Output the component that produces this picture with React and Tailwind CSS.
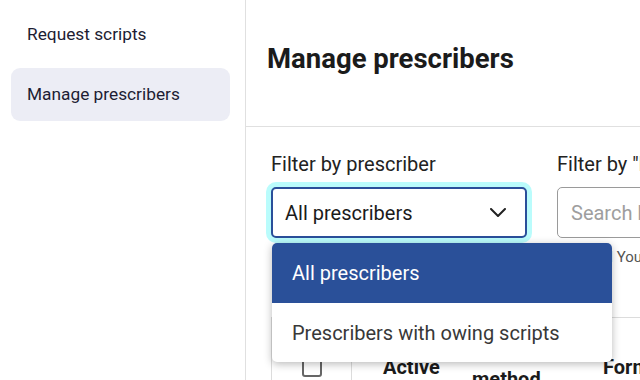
import React from 'react';

const navItems = [
  { label: 'Request scripts', active: false },
  { label: 'Manage prescribers', active: true },
];

const Chevron = () => (
  <svg width="16" height="9" viewBox="0 0 16 9" fill="none" className="shrink-0">
    <path d="M1 1l7 7 7-7" stroke="#222" strokeWidth="2" strokeLinecap="round" strokeLinejoin="round" />
  </svg>
);

export default function App() {
  return (
    <div className="flex h-[380px] w-[640px] overflow-hidden bg-white font-['Roboto',sans-serif]">
      <aside className="w-[246px] shrink-0 border-r border-[#e0e0e0]">
        <nav className="flex flex-col gap-[7px] pl-[11px] pr-[15px] pt-[8px]">
          {navItems.map((item) => (
            <div
              key={item.label}
              className={`flex h-[53px] items-center rounded-[9px] px-4 text-[17.3px] text-[#1d1d33] ${item.active ? 'bg-[#ecedf5]' : ''}`}
            >
              {item.label}
            </div>
          ))}
        </nav>
      </aside>

      <main className="min-w-0 flex-1">
        <header className="flex h-[127px] items-start border-b border-[#e0e0e0] pl-[21px] pt-[41px]">
          <h1 className="whitespace-nowrap text-[27.5px] font-bold leading-[36px] text-[#1b1b1b]">Manage prescribers</h1>
        </header>

        <div className="pl-[25px] pt-[24px]">
          <div className="flex gap-[30px] whitespace-nowrap">
            <div className="relative w-[256px] shrink-0">
              <label className="block text-[20px] leading-[26px] text-[#222]">Filter by prescriber</label>
              <div className="mt-[10px] flex h-[51px] items-center justify-between rounded-[5px] border-2 border-[#2a4f9a] bg-white pl-[12px] pr-[19px] text-[20px] text-[#1b1b1b] shadow-[0_0_0_5px_#bafcfc]">
                <span>All prescribers</span>
                <Chevron />
              </div>

              <div className="absolute left-[1px] top-[92px] z-10 w-[340px] overflow-hidden rounded-[5px] bg-white shadow-[0_2px_8px_rgba(0,0,0,0.28)]">
                <div className="flex h-[60px] items-center bg-[#2a5099] px-[20px] text-[20px] text-white">All prescribers</div>
                <div className="flex h-[59px] items-center px-[20px] text-[20px] text-[#383838]">Prescribers with owing scripts</div>
              </div>
            </div>

            <div className="shrink-0">
              <label className="block text-[20px] leading-[26px] text-[#222]">Filter by "Prescriber name"</label>
              <div className="mt-[10px] flex h-[51px] w-[280px] items-center rounded-[5px] border border-[#9a9a9a] px-[13px] text-[20px] text-[#9e9e9e]">
                Search by name
              </div>
              <p className="mt-[9px] text-[15px] leading-[20px] text-[#555]">Optional You can search by name</p>
            </div>
          </div>

          <div className="mt-[50px] flex h-[98px] items-center whitespace-nowrap border-l border-t border-[#dcdcdc] text-[20px] font-bold leading-[24px] text-[#1b1b1b]">
            <div className="flex h-full w-[80px] shrink-0 items-center justify-center border-r border-[#dcdcdc]">
              <span className="block h-[20px] w-[20px] rounded-[3px] border-2 border-[#666]" />
            </div>
            <div className="w-[100px] shrink-0 pl-[31px]">Active</div>
            <div className="w-[131px] shrink-0 pl-[20px]">
              Contact
              <br />
              method
            </div>
            <div className="shrink-0 pl-[20px]">Format</div>
          </div>
        </div>
      </main>
    </div>
  );
}
